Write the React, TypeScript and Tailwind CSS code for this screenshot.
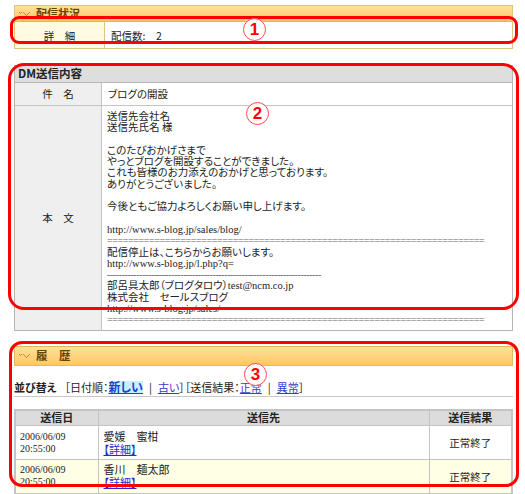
import React from "react";

const bodyLines = [
  "送信先会社名",
  "送信先氏名 様",
  "",
  "このたびおかげさまで",
  "やっとブログを開設することができました。",
  "これも皆様のお力添えのおかげと思っております。",
  "ありがとうございました。",
  "",
  "今後ともご協力よろしくお願い申し上げます。",
  "",
  "http://www.s-blog.jp/sales/blog/",
  "=".repeat(72),
  "配信停止は、こちらからお願いします。",
  "http://www.s-blog.jp/l.php?q=",
  "-".repeat(73),
  "部呂具太郎（ブログタロウ）test@ncm.co.jp",
  "株式会社　セールスブログ",
  "http://www.s-blog.jp/sales/",
  "=".repeat(72),
];

const history = [
  { date: "2006/06/09", time: "20:55:00", name: "愛媛　蜜柑", result: "正常終了", bg: "bg-white" },
  { date: "2006/06/09", time: "20:55:00", name: "香川　麺太郎", result: "正常終了", bg: "bg-[#ffffe6]" },
];

function lineClass(l: string) {
  if (l.startsWith("=") || l.startsWith("-")) return "text-[#666] text-[10px] tracking-[-0.4px]";
  return "";
}

function Mark() {
  return (
    <svg width="13" height="6" viewBox="0 0 13 6" className="shrink-0">
      <g fill="#c78a2c">
        <rect x="0" y="1" width="1" height="1" />
        <rect x="1" y="2" width="1" height="1" />
        <rect x="2" y="1" width="1" height="1" />
        <rect x="4" y="1" width="1" height="1" />
        <rect x="5" y="2" width="1" height="1" />
        <rect x="6" y="3" width="1" height="1" />
        <rect x="7" y="4" width="1" height="1" />
        <rect x="8" y="3" width="1" height="1" />
        <rect x="9" y="2" width="1" height="1" />
        <rect x="10" y="1" width="1" height="1" />
      </g>
    </svg>
  );
}

function Circled({ n, className }: { n: string; className: string }) {
  return (
    <div
      className={
        "absolute w-[23px] h-[23px] rounded-full border-[1.5px] border-[#ff4a4a] bg-white flex items-center justify-center " +
        className
      }
    >
      <span className="text-[17px] leading-none font-black text-[#ff0000] font-['Liberation_Sans',sans-serif]">{n}</span>
    </div>
  );
}

export default function App() {
  return (
    <div className="relative w-[525px] h-[494px] overflow-hidden bg-white text-[#222] font-['Noto_Sans_CJK_JP',sans-serif] [font-feature-settings:'palt']">
      <div className="ml-[14px] w-[499px] pt-[5px]">
        {/* 配信状況 */}
        <section className="border border-[#e2c283]">
          <div className="h-[16px] flex items-center gap-[4px] px-[4px] bg-gradient-to-b from-[#ffe09a] to-[#ffc862] border-b border-[#e6b860]">
            <Mark />
            <span className="text-[11px] font-bold text-[#6b4200] leading-none">配信状況</span>
          </div>
          <div className="flex h-[26px] text-[10.5px]">
            <div className="w-[90px] bg-[#fffbe3] border-r border-[#e2c283] flex items-center justify-center pt-[2px]">
              詳　細
            </div>
            <div className="px-[6px] flex items-center pt-[2px]">配信数:　2</div>
          </div>
        </section>

        {/* DM送信内容 */}
        <section className="mt-[16px] border border-[#b5b5b5]">
          <div className="h-[17px] bg-[#dedede] border-b border-[#b5b5b5] px-[3px] flex items-center text-[11.5px] font-bold leading-none">
            DM送信内容
          </div>
          <div className="flex h-[23px] border-b border-[#c4c4c4] text-[10.5px]">
            <div className="w-[87px] bg-[#efefef] border-r border-[#c4c4c4] flex items-center justify-center">件　名</div>
            <div className="px-[6px] flex items-center">ブログの開設</div>
          </div>
          <div className="flex text-[10.5px]">
            <div className="w-[87px] shrink-0 bg-[#efefef] border-r border-[#c4c4c4] flex items-center justify-center">
              本　文
            </div>
            <div className="px-[5px] pt-[5px] pb-[4px] leading-[11.3px] whitespace-pre font-['Liberation_Serif','Noto_Sans_CJK_JP',serif] overflow-hidden">
              {bodyLines.map((l, i) => (
                <div key={i} className={lineClass(l)}>
                  {l || "\u00a0"}
                </div>
              ))}
            </div>
          </div>
        </section>

        {/* 履歴 */}
        <section className="mt-[15px]">
          <div className="h-[20px] flex items-center gap-[4px] px-[4px] border border-[#e2b860] bg-gradient-to-b from-[#ffe09a] to-[#ffc862]">
            <Mark />
            <span className="text-[11.5px] font-bold text-[#6b4200] leading-none">履　歴</span>
          </div>
          <div className="h-[31px] flex items-end pb-[3px] border-b border-[#c8c8c8] text-[11px] leading-none whitespace-nowrap">
            <span className="font-bold">並び替え</span>
            <span className="ml-[8px]">［日付順：</span>
            <span className="font-bold text-[12px] text-[#1f3fd0] underline bg-[#c8f0ff]">新しい</span>
            <span className="mx-[6px]">|</span>
            <span className="text-[#3a3ad0] underline">古い</span>
            <span>］［送信結果：</span>
            <span className="text-[#3a3ad0] underline">正常</span>
            <span className="mx-[6px]">|</span>
            <span className="text-[#3a3ad0] underline">異常</span>
            <span>］</span>
          </div>
          <table className="mt-[12px] w-full border-collapse border-2 border-[#c4c4c4] text-[11px]">
            <thead>
              <tr className="bg-[#dcdcdc] h-[16px]">
                <th className="w-[83px] border border-[#c4c4c4] font-bold leading-none">送信日</th>
                <th className="border border-[#c4c4c4] font-bold leading-none">送信先</th>
                <th className="w-[83px] border border-[#c4c4c4] font-bold leading-none">送信結果</th>
              </tr>
            </thead>
            <tbody>
              {history.map((h, i) => (
                <tr key={i} className={h.bg + " h-[34px]"}>
                  <td className="border border-[#c4c4c4] px-[4px] font-['Liberation_Serif',serif] text-[10px] leading-[12px]">
                    <div>{h.date}</div>
                    <div>{h.time}</div>
                  </td>
                  <td className="border border-[#c4c4c4] px-[5px] leading-[13px]">
                    <div>{h.name}</div>
                    <div className="text-[#2a2ad0] underline">【詳細】</div>
                  </td>
                  <td className="border border-[#c4c4c4] text-center text-[10.5px]">{h.result}</td>
                </tr>
              ))}
            </tbody>
          </table>
        </section>
      </div>

      {/* annotations */}
      <div className="absolute left-[10px] top-[16px] w-[508px] h-[28px] rounded-[9px] border-[3px] border-[#ff0000]" />
      <div className="absolute left-[8px] top-[63px] w-[511px] h-[247px] rounded-[16px] border-[3px] border-[#ff0000]" />
      <div className="absolute left-[9px] top-[341px] w-[510px] h-[146px] rounded-[13px] border-[3px] border-[#ff0000]" />
      <Circled n="1" className="left-[243px] top-[18px]" />
      <Circled n="2" className="left-[246px] top-[102px]" />
      <Circled n="3" className="left-[244px] top-[363px]" />
    </div>
  );
}
